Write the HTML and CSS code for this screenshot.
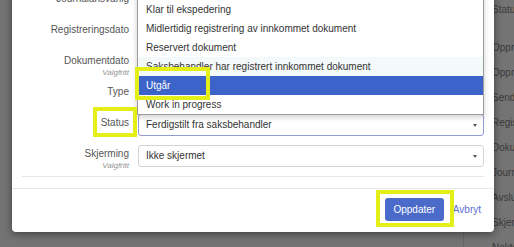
FILE: index.html
```html
<!DOCTYPE html>
<html lang="no">
<head>
    <meta charset="UTF-8">
    <meta name="viewport" content="width=device-width, initial-scale=1.0">
    <title>Oppdater journalpost</title>
    <link rel="stylesheet" href="styles.css">
</head>
<body>
    <div class="page">
        <div class="page-main"></div>
        <ul class="page-side">
            <li class="first">Status</li>
            <li>Opprettet</li>
            <li>Opprettet av</li>
            <li>Sendt</li>
            <li>Registrert</li>
            <li>Dokumentdato</li>
            <li>Journalført</li>
            <li>Avsluttet</li>
            <li>Skjerming</li>
            <li>Nektet</li>
        </ul>
    </div>

    <div class="modal">
        <div class="modal-body">
            <div class="row">
                <div class="label"><span>Journalansvarlig</span></div>
                <div class="field"><div class="input"></div></div>
            </div>
            <div class="row">
                <div class="label"><span>Registreringsdato</span></div>
                <div class="field"><div class="input"></div></div>
            </div>
            <div class="row">
                <div class="label"><span>Dokumentdato</span><small>Valgfritt</small></div>
                <div class="field"><div class="input"></div></div>
            </div>
            <div class="row">
                <div class="label"><span>Type</span></div>
                <div class="field"><div class="input"></div></div>
            </div>
            <div class="row">
                <div class="label"><span>Status</span><span class="mark mark-status"></span></div>
                <div class="field">
                    <div class="select focus">Ferdigstilt fra saksbehandler<span class="caret"></span></div>
                    <ul class="options">
                        <li>Ekspedert</li>
                        <li>Klar til ekspedering</li>
                        <li>Midlertidig registrering av innkommet dokument</li>
                        <li>Reservert dokument</li>
                        <li class="hover">Saksbehandler har registrert innkommet dokument</li>
                        <li class="active">Utgår<span class="mark mark-option"></span></li>
                        <li>Work in progress</li>
                    </ul>
                </div>
            </div>
            <div class="row">
                <div class="label"><span>Skjerming</span><small>Valgfritt</small></div>
                <div class="field">
                    <div class="select">Ikke skjermet<span class="caret"></span></div>
                </div>
            </div>
            <hr class="divider">
        </div>
        <div class="modal-footer">
            <button class="btn">Oppdater<span class="mark mark-btn"></span></button>
            <a class="link" href="#">Avbryt</a>
        </div>
    </div>
</body>
</html>
```

FILE: styles.css
```css
body {
    margin: 0;
    width: 514px;
    height: 247px;
    overflow: hidden;
    background-color: #747474;
    font-family: "Liberation Sans", Arial, sans-serif;
    font-size: 10px;
    position: relative;
}
.page {
    display: flex;
    height: 247px;
    overflow: hidden;
}
.page-main {
    flex: none;
    width: 463px;
    border-right: 1px solid #666;
}
.page-side {
    flex: none;
    margin: 0;
    padding: 0 0 0 28px;
    list-style: none;
    color: #3a3a3a;
    line-height: 25px;
    white-space: nowrap;
}
.page-side .first {
    margin-top: -3px;
    margin-bottom: 13px;
}

.modal {
    position: absolute;
    top: -20px;
    left: 12px;
    width: 482px;
    background-color: #fff;
    border-radius: 4px;
    box-shadow: 0 2px 8px rgba(0, 0, 0, 0.45);
}
.modal-body {
    padding: 10px 10px 11px 10px;
}
.row {
    display: flex;
    gap: 9px;
    height: 22px;
    margin-bottom: 9px;
}
.label {
    position: relative;
    width: 107px;
    padding-top: 1px;
    display: flex;
    flex-direction: column;
    align-items: flex-end;
    color: #555;
    line-height: 15px;
}
.label small {
    font-size: 8px;
    line-height: 9px;
    font-style: italic;
    color: #949494;
}
.field {
    flex: 1;
    position: relative;
}
.input,
.select {
    position: relative;
    height: 22px;
    box-sizing: border-box;
    border: 1px solid #d4d4d4;
    border-radius: 3px;
    padding: 0 7px;
    line-height: 20px;
    color: #333;
}
.select.focus {
    border-color: #9499d6;
}
.caret {
    position: absolute;
    right: 6px;
    top: 9px;
    border-left: 2.5px solid transparent;
    border-right: 2.5px solid transparent;
    border-top: 3px solid #555;
}
.options {
    position: absolute;
    left: -1px;
    right: 0;
    bottom: 21px;
    margin: 0;
    padding: 0;
    list-style: none;
    background-color: #fff;
    border: 1px solid #9c9c9c;
    box-shadow: 0 2px 6px rgba(0, 0, 0, 0.2);
    color: #333;
    z-index: 2;
}
.options li {
    position: relative;
    line-height: 19px;
    padding-left: 8px;
}
.options .hover {
    background-color: #f4f9fa;
}
.options .active {
    background-color: #3b63c9;
    color: #fff;
}
.divider {
    margin: 0;
    border: none;
    border-top: 1px solid #e6e6e6;
}
.modal-footer {
    display: flex;
    justify-content: flex-end;
    align-items: center;
    gap: 9px;
    border-top: 1px solid #e6e6e6;
    padding: 9px 13px 11px;
}
.btn {
    position: relative;
    width: 59px;
    height: 23px;
    padding: 0;
    border: none;
    border-radius: 3px;
    background-color: #4b6bcb;
    color: #fff;
    font-family: "Liberation Sans", Arial, sans-serif;
    font-size: 10px;
}
.link {
    color: #5d6ed2;
    text-decoration: none;
}

/* yellow annotation boxes */
.mark {
    position: absolute;
    box-sizing: border-box;
    border: 4px solid #e3ef17;
    pointer-events: none;
    z-index: 3;
}
.mark-status {
    left: 71px;
    top: -7px;
    width: 44px;
    height: 30px;
}
.mark-option {
    left: -3px;
    top: -9px;
    width: 75px;
    height: 33px;
}
.mark-btn {
    left: -9px;
    top: -8px;
    width: 78px;
    height: 37px;
}
```
